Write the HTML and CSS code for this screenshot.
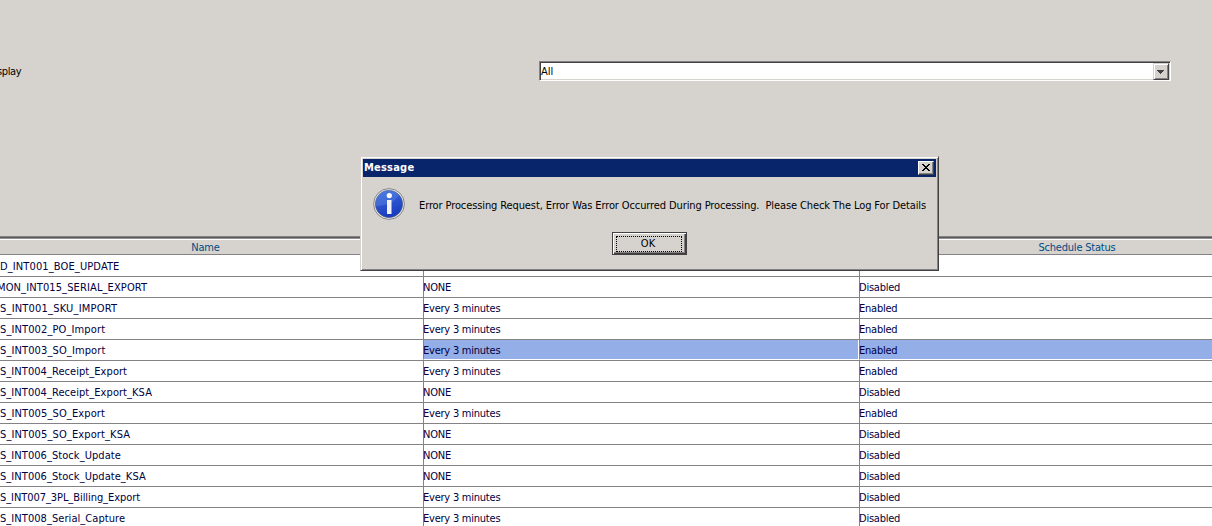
FILE: index.html
```
<!DOCTYPE html>
<html lang="en">
<head>
<meta charset="utf-8">
<title>Message</title>
<link rel="stylesheet" href="styles.css">
</head>
<body>
<main class="screen">
  <section class="filters">
    <label class="filter-label">splay</label>
    <div class="select"><span class="select-value">All</span><span class="select-button"><svg width="7" height="4" viewBox="0 0 7 4" shape-rendering="crispEdges"><path d="M0 0h7v1H0zM1 1h5v1H1zM2 2h3v1H2zM3 3h1v1H3z" fill="#424242"/></svg></span></div>
  </section>
  <section class="grid">
    <div class="row head"><span>Name</span><span></span><span>Schedule Status</span></div>
    <div class="row"><span class="name">D_INT001_BOE_UPDATE</span><span class="cell"></span><span class="cell"></span></div>
    <div class="row"><span class="name cut">MON_INT015_SERIAL_EXPORT</span><span class="cell">NONE</span><span class="cell">Disabled</span></div>
    <div class="row"><span class="name wide">S_INT001_SKU_IMPORT</span><span class="cell">Every 3 minutes</span><span class="cell">Enabled</span></div>
    <div class="row"><span class="name">S_INT002_PO_Import</span><span class="cell">Every 3 minutes</span><span class="cell">Enabled</span></div>
    <div class="row selected"><span class="name">S_INT003_SO_Import</span><span class="cell">Every 3 minutes</span><span class="cell">Enabled</span></div>
    <div class="row"><span class="name snug">S_INT004_Receipt_Export</span><span class="cell">Every 3 minutes</span><span class="cell">Enabled</span></div>
    <div class="row"><span class="name snug">S_INT004_Receipt_Export_KSA</span><span class="cell">NONE</span><span class="cell">Disabled</span></div>
    <div class="row"><span class="name">S_INT005_SO_Export</span><span class="cell">Every 3 minutes</span><span class="cell">Enabled</span></div>
    <div class="row"><span class="name">S_INT005_SO_Export_KSA</span><span class="cell">NONE</span><span class="cell">Disabled</span></div>
    <div class="row"><span class="name snug">S_INT006_Stock_Update</span><span class="cell">NONE</span><span class="cell">Disabled</span></div>
    <div class="row"><span class="name snug">S_INT006_Stock_Update_KSA</span><span class="cell">NONE</span><span class="cell">Disabled</span></div>
    <div class="row"><span class="name tight">S_INT007_3PL_Billing_Export</span><span class="cell">Every 3 minutes</span><span class="cell">Disabled</span></div>
    <div class="row"><span class="name snug">S_INT008_Serial_Capture</span><span class="cell">Every 3 minutes</span><span class="cell">Disabled</span></div>
  </section>
  <div class="dialog">
    <header class="titlebar"><span class="title">Message</span><span class="close"><svg width="8" height="7" viewBox="0 0 8 7" shape-rendering="crispEdges"><path d="M0 0h2v1H0zM6 0h2v1H6zM1 1h2v1H1zM5 1h2v1H5zM2 2h4v1H2zM3 3h2v1H3zM2 4h4v1H2zM1 5h2v1H1zM5 5h2v1H5zM0 6h2v1H0zM6 6h2v1H6z"/></svg></span></header>
    <div class="message">
      <svg class="info" width="32" height="32" viewBox="0 0 32 32">
        <defs><linearGradient id="ball" x1="0" y1="0" x2="0.3" y2="1"><stop offset="0" stop-color="#3d70de"/><stop offset="1" stop-color="#1a3cc0"/></linearGradient></defs>
        <circle cx="16" cy="16" r="15.4" fill="#e8e8e6" stroke="#858588"/>
        <circle cx="16" cy="16" r="13.6" fill="url(#ball)" stroke="#45527e" stroke-width=".7"/>
        <path d="M2.9 18C7 18 20 17 26 7a13 13 0 0 0-23.1 11z" fill="#7197e8" opacity=".3"/>
        <circle cx="16.3" cy="7.6" r="2.6" fill="#fff"/>
        <path d="M14 12h4.500v14H14z" fill="#f2f3f8"/>
      </svg>
      <p class="message-text">Error Processing Request, Error Was Error Occurred During Processing.&nbsp; Please Check The Log For Details</p>
    </div>
    <button class="ok"><span>OK</span></button>
  </div>
</main>
</body>
</html>
```
FILE: styles.css
```
* { box-sizing: border-box; }
body { margin: 0; }
.screen {
  position: relative;
  display: flex;
  flex-direction: column;
  width: 1212px;
  height: 526px;
  overflow: hidden;
  background: #d6d3ce;
  color: #000;
  font: 11px/14px "DejaVu Sans Condensed", "DejaVu Sans", sans-serif;
  white-space: nowrap;
}
.filters {
  display: flex;
  align-items: flex-start;
  flex: 0 0 236px;
  padding-top: 61px;
}
.filter-label { width: 539px; padding-top: 4px; text-indent: -3px; letter-spacing: -.4px; }
.select {
  display: flex;
  width: 632px;
  height: 20px;
  background: #fff;
  border: 1px solid;
  border-color: #848284 #fff #fff #848284;
  box-shadow: inset 1px 1px #424142, inset -1px -1px #d6d3ce;
}
.select-value { flex: 1; padding: 3px 0 0 1px; }
.select-button {
  display: flex;
  align-items: center;
  justify-content: center;
  width: 16px;
  height: 17px;
  margin: 1px 1px 0 0;
  background: #d6d3ce;
  border: 1px solid;
  border-color: #d6d3ce #424142 #424142 #d6d3ce;
  box-shadow: inset 1px 1px #fff, inset -1px -1px #848284;
}
.select-button svg { margin-right: 1px; }
.grid {
  flex: 1;
  border-top: 1px solid #848284;
  box-shadow: inset 0 1px #5a595a, inset 0 2px #949294;
  padding-top: 2px;
}
.row {
  display: grid;
  grid-template-columns: 423px 436px 353px;
  height: 21px;
  background: #fff;
  border-bottom: 1px solid #848284;
  color: #000042;
}
.row:nth-child(2) { height: 22px; }
.row:nth-child(2) .name { padding-top: 5px; }
.row.head {
  grid-template-columns: 411px 449px 434px;
  height: 16px;
  border-top: 1px solid #fff;
  background: #d6d3ce;
  color: #004a84;
  text-align: center;
  letter-spacing: -.2px;
  line-height: 16px;
}
.name, .cell { padding-top: 4px; }
.name { letter-spacing: .12px; }
.name.wide { letter-spacing: .2px; }
.name.snug { letter-spacing: .06px; }
.name.tight { letter-spacing: -.07px; }
.cell { border-left: 1px solid #848284; text-indent: -1px; letter-spacing: -.23px; }
.selected .cell {
  background: #94aee7;
  border-bottom: 1px solid #fff;
  box-shadow: inset -1px 0 #fff;
}
.selected .cell:last-child { box-shadow: none; }
.name.cut { text-indent: -3px; }
.dialog {
  position: absolute;
  left: 360px;
  top: 156px;
  width: 579px;
  height: 115px;
  padding: 2px;
  display: flex;
  flex-direction: column;
  background: #d6d3ce;
  border: 1px solid;
  border-color: #d6d3ce #424142 #424142 #d6d3ce;
  box-shadow: inset 1px 1px #fff, inset -1px -1px #848284;
}
.titlebar {
  display: flex;
  justify-content: space-between;
  align-items: flex-start;
  height: 18px;
  padding: 2px 2px 0 1px;
  background: #08246b;
  color: #fff;
  font-weight: bold;
  letter-spacing: .22px;
}
.close {
  display: flex;
  align-items: center;
  justify-content: center;
  width: 16px;
  height: 14px;
  padding: 0 1px 1px 0;
  background: #d6d3ce;
  border: 1px solid;
  border-color: #fff #424142 #424142 #fff;
  box-shadow: inset -1px -1px #848284;
}
.message { display: flex; padding: 11px 0 0 10px; gap: 14px; }
.info { flex: none; }
.message-text { margin: 11px 0 0; letter-spacing: -.11px; }
.ok {
  align-self: center;
  width: 75px;
  height: 23px;
  margin-top: 12px;
  padding: 2px;
  border: 1px solid #424142;
  background: #d6d3ce;
  box-shadow: inset 1px 1px #fff, inset -1px -1px #424142, inset -2px -2px #848284;
  font: inherit;
  color: #000;
}
.ok span {
  display: block;
  width: 66px;
  height: 16px;
  margin-left: 1px;
  padding-right: 2px;
  border: 1px dotted #000;
  line-height: 14px;
}
```
